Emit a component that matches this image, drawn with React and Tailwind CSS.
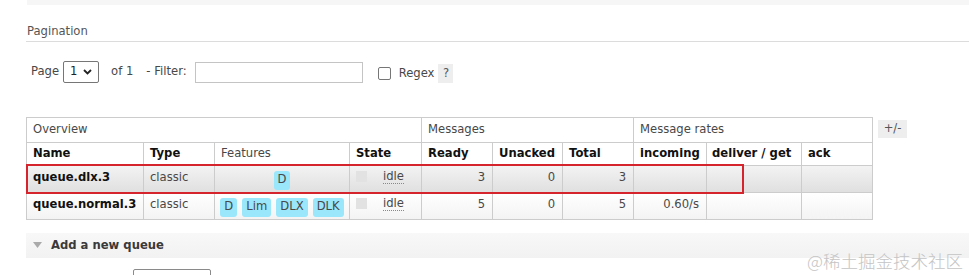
import React from 'react';

const Badge = ({ children }) => (
  <span className="inline-flex items-center h-[19px] px-[4px] rounded-[3px] bg-[#9ae7fb] text-[#484848]">
    {children}
  </span>
);

const StateCell = () => (
  <div className="flex items-center">
    <span className="w-[11px] h-[11px] ml-[6px] bg-[#e2e2e2]" />
    <span className="ml-[16px] border-b border-dotted border-[#888] leading-[14px]">idle</span>
  </div>
);

const cols = [117, 71, 135, 72, 71, 70, 71, 73, 95, 71];

export default function App() {
  return (
    <div className="relative w-[969px] h-[275px] overflow-hidden bg-white font-['DejaVu_Sans',Verdana,sans-serif] text-[11.6px] text-[#484848]">
      <div className="ml-[27px] h-[5px] bg-[#f6f6f6]" />

      <div className="ml-[26px]">
        <h3 className="pt-[19px] pl-[1px] text-[11.6px] leading-[14px] font-normal text-[#555]">Pagination</h3>
        <div className="mt-[3px] border-t border-[#dcdcdc]" />

        <div className="flex items-center h-[22px] mt-[19px] pl-[5px]">
          <span>Page</span>
          <div className="ml-[4px] w-[36px] h-[22px] flex items-center justify-between px-[6px] border border-[#767676] rounded-[2px] text-[#222]">
            <span>1</span>
            <svg width="9" height="6" viewBox="0 0 9 6" fill="none">
              <path d="M1 1l3.5 3.5L8 1" stroke="#222" strokeWidth="1.8" />
            </svg>
          </div>
          <span className="ml-[12px]">of 1</span>
          <span className="ml-[13px]">- Filter:</span>
          <div className="ml-[8px] w-[168px] h-[21px] border border-[#c4c4c4]" />
          <div className="ml-[15px] mt-[2px] w-[13px] h-[13px] border border-[#767676] rounded-[2px]" />
          <span className="ml-[8px] mt-[4px]">Regex</span>
          <span className="ml-[4px] mt-[3px] w-[15px] h-[19px] flex items-center justify-center bg-[#eeeeee] text-[#555]">?</span>
        </div>

        <div className="relative flex items-start mt-[34px]">
          <table className="table-fixed border-collapse w-[847px] whitespace-nowrap">
            <colgroup>
              {cols.map((w, i) => (
                <col key={i} style={{ width: w }} />
              ))}
            </colgroup>
            <thead>
              <tr className="h-[25px]">
                <th colSpan={4} className="border border-[#cccccc] px-[6px] text-left font-normal">Overview</th>
                <th colSpan={3} className="border border-[#cccccc] px-[6px] text-left font-normal">Messages</th>
                <th colSpan={3} className="border border-[#cccccc] px-[6px] text-left font-normal">Message rates</th>
              </tr>
              <tr className="h-[23px] text-[#111]">
                <th className="border border-[#cccccc] px-[6px] text-left font-bold">Name</th>
                <th className="border border-[#cccccc] px-[6px] text-left font-bold">Type</th>
                <th className="border border-[#cccccc] px-[6px] text-left font-normal text-[#484848]">Features</th>
                <th className="border border-[#cccccc] px-[6px] text-left font-bold">State</th>
                <th className="border border-[#cccccc] px-[6px] text-left font-bold">Ready</th>
                <th className="border border-[#cccccc] px-[6px] text-left font-bold">Unacked</th>
                <th className="border border-[#cccccc] px-[6px] text-left font-bold">Total</th>
                <th className="border border-[#cccccc] px-[6px] text-left font-bold">incoming</th>
                <th className="border border-[#cccccc] px-[5px] text-left font-bold">deliver / get</th>
                <th className="border border-[#cccccc] px-[6px] text-left font-bold">ack</th>
              </tr>
            </thead>
            <tbody>
              <tr className="h-[27px] bg-gradient-to-b from-[#f3f3f3] to-[#dfdfdf]">
                <td className="border border-[#cccccc] px-[6px] font-bold text-[#111] align-top pt-[3px]">queue.dlx.3</td>
                <td className="border border-[#cccccc] px-[6px] align-top pt-[3px]">classic</td>
                <td className="border border-[#cccccc] px-[6px] pt-[2px]">
                  <div className="flex justify-center gap-[5px]">
                    <Badge>D</Badge>
                  </div>
                </td>
                <td className="border border-[#cccccc] px-0 align-top pt-[3px]"><StateCell /></td>
                <td className="border border-[#cccccc] px-[7px] text-right align-top pt-[3px]">3</td>
                <td className="border border-[#cccccc] px-[7px] text-right align-top pt-[3px]">0</td>
                <td className="border border-[#cccccc] px-[7px] text-right align-top pt-[3px]">3</td>
                <td className="border border-[#cccccc] px-[7px] text-right align-top pt-[3px]"></td>
                <td className="border border-[#cccccc] px-[7px] text-right align-top pt-[3px]"></td>
                <td className="border border-[#cccccc] px-[7px] text-right align-top pt-[3px]"></td>
              </tr>
              <tr className="h-[27px] bg-gradient-to-b from-[#ffffff] to-[#f3f3f3]">
                <td className="border border-[#cccccc] px-[6px] font-bold text-[#111] align-top pt-[3px]">queue.normal.3</td>
                <td className="border border-[#cccccc] px-[6px] align-top pt-[3px]">classic</td>
                <td className="border border-[#cccccc] px-[4px] pt-[2px]">
                  <div className="flex justify-center gap-[5px]">
                    <Badge>D</Badge>
                    <Badge>Lim</Badge>
                    <Badge>DLX</Badge>
                    <Badge>DLK</Badge>
                  </div>
                </td>
                <td className="border border-[#cccccc] px-0 align-top pt-[3px]"><StateCell /></td>
                <td className="border border-[#cccccc] px-[7px] text-right align-top pt-[3px]">5</td>
                <td className="border border-[#cccccc] px-[7px] text-right align-top pt-[3px]">0</td>
                <td className="border border-[#cccccc] px-[7px] text-right align-top pt-[3px]">5</td>
                <td className="border border-[#cccccc] px-[7px] text-right align-top pt-[3px]">0.60/s</td>
                <td className="border border-[#cccccc] px-[7px] text-right align-top pt-[3px]"></td>
                <td className="border border-[#cccccc] px-[7px] text-right align-top pt-[3px]"></td>
              </tr>
            </tbody>
          </table>
          <button className="ml-[5px] mt-[3px] w-[29px] h-[18px] flex items-center justify-center bg-[#eeeeee] text-[#555] text-[11.6px]">
            +/-
          </button>
          <div className="absolute left-0 top-[47px] w-[718px] h-[30px] border-2 border-[#d5242c] pointer-events-none" />
        </div>

        <div className="mt-[13px] h-[25px] flex items-center bg-gradient-to-b from-[#f8f8f8] to-[#f2f2f2]">
          <svg width="9" height="7" viewBox="0 0 9 7" className="ml-[7px]">
            <path d="M0 0h9L4.5 6z" fill="#aaaaaa" />
          </svg>
          <span className="ml-[9px] font-bold text-[#3a3a3a]">Add a new queue</span>
        </div>

        <div className="mt-[11px] ml-[107px] w-[78px] h-[20px] border border-[#8a8a8a] rounded-[2px]" />
      </div>

      <div className="absolute right-[6px] bottom-[4px] text-[17.5px] leading-[20px] text-[#c4c4c4] font-['Noto_Sans_CJK_SC',sans-serif] font-light">
        @稀土掘金技术社区
      </div>
    </div>
  );
}
